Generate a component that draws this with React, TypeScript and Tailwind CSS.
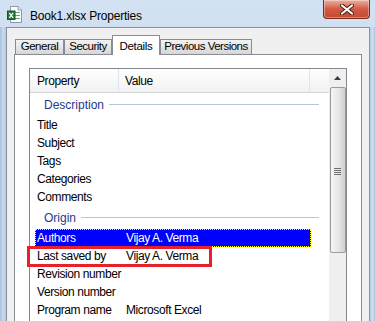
import React from 'react';

const FONT = { fontFamily: '"Liberation Sans", Arial, sans-serif' };

const rows: { name: string; value?: string; kind?: 'section' | 'selected' | 'row' }[] = [
  { name: 'Description', kind: 'section' },
  { name: 'Title' },
  { name: 'Subject' },
  { name: 'Tags' },
  { name: 'Categories' },
  { name: 'Comments' },
  { name: 'Origin', kind: 'section' },
  { name: 'Authors', value: 'Vijay A. Verma', kind: 'selected' },
  { name: 'Last saved by', value: 'Vijay A. Verma' },
  { name: 'Revision number' },
  { name: 'Version number' },
  { name: 'Program name', value: 'Microsoft Excel' },
];

function ExcelIcon() {
  return (
    <svg width="15" height="17" viewBox="0 0 15 17">
      <path d="M3.5 0.5 H11 L14.5 4 V16.5 H3.5 Z" fill="#ffffff" stroke="#8c9aa8" />
      <path d="M11 0.5 V4 H14.5" fill="#e8eef4" stroke="#8c9aa8" />
      <g stroke="#5fa86b" strokeWidth="1">
        <line x1="8" y1="6.5" x2="13" y2="6.5" />
        <line x1="8" y1="9.5" x2="13" y2="9.5" />
        <line x1="8" y1="12.5" x2="13" y2="12.5" />
      </g>
      <rect x="0.5" y="5" width="7.5" height="8.5" fill="#1f7a3a" stroke="#14572a" />
      <path d="M2.3 6.8 L6.2 11.8 M6.2 6.8 L2.3 11.8" stroke="#ffffff" strokeWidth="1.3" />
    </svg>
  );
}

function CloseButton() {
  return (
    <div className="w-[47px] h-[19px] rounded-b-[4px] border border-t-0 border-[#7a2b20] bg-gradient-to-b from-[#eab0a2] via-[#d35a43] to-[#c44a31] flex items-center justify-center shadow-[inset_0_0_0_1px_rgba(255,255,255,0.35)]">
      <svg width="14" height="11" viewBox="0 0 14 11">
        <path d="M2 1.5 L12 9.5 M12 1.5 L2 9.5" stroke="#4a1a14" strokeWidth="4" strokeLinecap="round" />
        <path d="M2 1.5 L12 9.5 M12 1.5 L2 9.5" stroke="#ffffff" strokeWidth="2.2" strokeLinecap="round" />
      </svg>
    </div>
  );
}

function Tab({ label, width, selected }: { label: string; width: number; selected?: boolean }) {
  if (selected) {
    return (
      <div
        className="h-[20px] -mb-px relative z-10 bg-white border border-b-0 border-[#898c95] flex items-start justify-center pt-[2px] text-[11.5px] tracking-[-0.3px] text-black whitespace-nowrap"
        style={{ width }}
      >
        {label}
      </div>
    );
  }
  return (
    <div
      className="h-[15px] border border-b-0 border-[#898c95] bg-gradient-to-b from-[#f2f2f2] via-[#e6e6e6] to-[#d6d6d6] flex items-center justify-center text-[11.5px] tracking-[-0.5px] text-black whitespace-nowrap"
      style={{ width }}
    >
      {label}
    </div>
  );
}

function Scrollbar() {
  return (
    <div className="w-[17px] bg-[#efefef] flex flex-col items-center">
      <div className="h-[18px] w-full flex items-center justify-center">
        <svg width="7" height="4" viewBox="0 0 7 4">
          <path d="M0 4 L3.5 0 L7 4 Z" fill="#3c3c3c" />
        </svg>
      </div>
      <div className="w-[16px] h-[166px] rounded-[2px] border border-[#9a9a9a] bg-gradient-to-r from-[#f5f5f5] via-[#e8e8e8] to-[#cfcfcf] flex items-center justify-center">
        <div className="flex flex-col gap-[1px] mt-[2px]">
          <div className="w-[7px] h-px bg-[#707070]" />
          <div className="w-[7px] h-px bg-[#707070]" />
          <div className="w-[7px] h-px bg-[#707070]" />
          <div className="w-[7px] h-px bg-[#707070]" />
        </div>
      </div>
    </div>
  );
}

export default function App() {
  return (
    <div
      className="relative w-[375px] h-[321px] overflow-hidden bg-gradient-to-b from-[#d3e2f2] via-[#c3d7ec] to-[#b2cae4] flex flex-col"
      style={FONT}
    >
      {/* title bar */}
      <div className="h-[27px] flex items-start shrink-0">
        <div className="ml-[7px] mt-[6px]">
          <ExcelIcon />
        </div>
        <div className="ml-[8px] mt-[7px] text-[12px] tracking-[-0.2px] text-black whitespace-nowrap">Book1.xlsx Properties</div>
        <div className="ml-auto mr-[5px]">
          <CloseButton />
        </div>
      </div>

      {/* window body */}
      <div className="flex-1 flex">
        <div className="w-[6px] bg-gradient-to-r from-[#a8c0dc] via-[#c9dbef] to-[#b4cbe5]" />
        <div className="w-[364px] border border-[#8a8f98] bg-[#f0f0f0] px-[7px] flex flex-col">
          {/* tabs */}
          <div className="h-[26px] flex items-end pl-[1px]">
            <Tab label="General" width={49} />
            <Tab label="Security" width={48} />
            <Tab label="Details" width={48} selected />
            <Tab label="Previous Versions" width={92} />
          </div>

          {/* tab page */}
          <div className="flex-1 bg-white border border-[#898c95] border-b-0 px-[14px] pt-[13px]">
            <div className="h-[300px] border border-[#828790] flex bg-white">
              <div className="flex-1 flex flex-col text-[12px] tracking-[-0.4px] whitespace-nowrap">
                {/* header */}
                <div className="h-[24px] flex items-center border-b border-[#d5d5d5] bg-gradient-to-b from-[#ffffff] to-[#f1f2f4] text-black">
                  <div className="w-[89px] pl-[7px] h-full flex items-center border-r border-[#e3e4e6]">Property</div>
                  <div className="w-[191px] pl-[6px] h-full flex items-center border-r border-[#e3e4e6]">Value</div>
                </div>

                {rows.map((r) =>
                  r.kind === 'section' ? (
                    <div key={r.name} className="h-[23px] flex items-center pl-[14px] pr-[10px] gap-[5px]">
                      <span className="tracking-[0px] text-[#1e3991]">{r.name}</span>
                      <div className="flex-1 h-px bg-[#b4c5e4]" />
                    </div>
                  ) : (
                    <div
                      key={r.name}
                      className={
                        r.kind === 'selected'
                          ? 'h-[18px] ml-[5px] w-[276px] flex items-center text-white bg-[#0000ff] border border-dotted border-[#ffff00]'
                          : 'h-[18px] ml-[5px] w-[276px] flex items-center text-black'
                      }
                    >
                      <span className={r.kind === 'selected' ? 'w-[90px] shrink-0 pl-[1px]' : 'w-[91px] shrink-0 pl-[2px]'}>{r.name}</span>
                      <span>{r.value}</span>
                    </div>
                  )
                )}
              </div>
              <Scrollbar />
            </div>
          </div>
        </div>
        <div className="flex-1 bg-gradient-to-r from-[#b4cbe5] via-[#cfe0f2] to-[#a9c2de]" />
      </div>

      {/* red annotation */}
      <div className="absolute left-[27px] top-[246px] w-[185px] h-[21px] border-[3px] border-[#e8202a]" />
    </div>
  );
}
